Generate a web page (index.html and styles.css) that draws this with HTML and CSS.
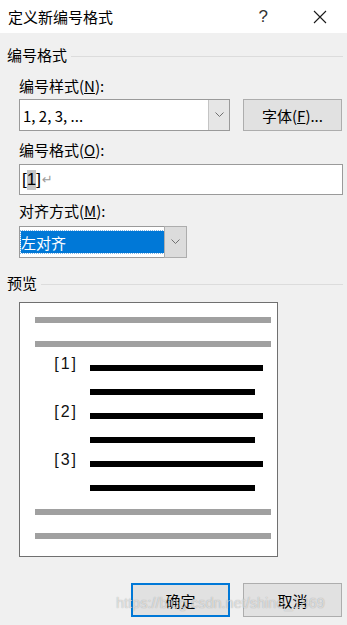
FILE: index.html
```html
<!DOCTYPE html>
<html lang="zh-CN">
<head>
    <meta charset="UTF-8">
    <title>定义新编号格式</title>
    <link rel="stylesheet" href="styles.css">
</head>
<body>
    <div class="dialog">
        <div class="titlebar">
            <span class="title">定义新编号格式</span>
            <span class="help">?</span>
            <svg class="close" width="14" height="14" viewBox="0 0 14 14">
                <path d="M1 1 L13 13 M13 1 L1 13" stroke="#1a1a1a" stroke-width="1.1" fill="none"/>
            </svg>
        </div>

        <div class="body">
            <div class="group">
                <span>编号格式</span>
                <div class="rule"></div>
            </div>

            <div class="field">
                <div class="label">编号样式(<u>N</u>):</div>
                <div class="row">
                    <div class="combo wide">
                        <div class="value">1, 2, 3, ...</div>
                        <div class="arrow">
                            <svg width="9" height="6" viewBox="0 0 9 6"><path d="M0.5 0.5 L4.5 4.5 L8.5 0.5" stroke="#707070" fill="none"/></svg>
                        </div>
                    </div>
                    <button class="btn">字体(<u>F</u>)...</button>
                </div>
            </div>

            <div class="field">
                <div class="label second">编号格式(<u>O</u>):</div>
                <div class="textbox">[<span class="sel">1</span>]<span class="ret">↵</span></div>
            </div>

            <div class="field">
                <div class="label third">对齐方式(<u>M</u>):</div>
                <div class="combo narrow">
                    <div class="value picked"><span>左对齐</span></div>
                    <div class="arrow dark">
                        <svg width="9" height="6" viewBox="0 0 9 6"><path d="M0.5 0.5 L4.5 4.5 L8.5 0.5" stroke="#707070" fill="none"/></svg>
                    </div>
                </div>
            </div>

            <div class="group preview-head">
                <span>预览</span>
                <div class="rule"></div>
            </div>

            <div class="preview">
                <div class="line grey"></div>
                <div class="line grey"></div>
                <div class="item"><span class="num">[1]</span><div class="bar"></div></div>
                <div class="item"><span class="num"></span><div class="bar short"></div></div>
                <div class="item"><span class="num">[2]</span><div class="bar"></div></div>
                <div class="item"><span class="num"></span><div class="bar short"></div></div>
                <div class="item"><span class="num">[3]</span><div class="bar"></div></div>
                <div class="item"><span class="num"></span><div class="bar short"></div></div>
                <div class="line grey"></div>
                <div class="line grey last"></div>
            </div>

            <div class="buttons">
                <button class="btn primary">确定</button>
                <button class="btn">取消</button>
            </div>
        </div>

        <div class="watermark">https://blog.csdn.net/shine_1869</div>
    </div>
</body>
</html>
```

FILE: styles.css
```css
body {
    margin: 0;
    padding: 0;
    background-color: #f0f0f0;
    font-family: "Noto Sans CJK SC", "Noto Sans", sans-serif;
    font-size: 15px;
    color: #000;
}

.dialog {
    position: relative;
    width: 347px;
    height: 625px;
    overflow: hidden;
}

.titlebar {
    height: 33px;
    background-color: #fff;
    display: flex;
    align-items: center;
    padding-left: 8px;
}

.title {
    flex: 1;
    font-size: 15px;
    line-height: 20px;
}

.help {
    font-family: "Liberation Sans", sans-serif;
    font-size: 17px;
    color: #333;
    margin-right: 45px;
}

.close {
    margin-right: 20px;
}

.body {
    padding: 0 4px 0 7px;
}

.group {
    display: flex;
    align-items: center;
    margin-top: 12px;
    line-height: 20px;
}

.group .rule {
    flex: 1;
    border-top: 1px solid #dcdcdc;
    margin-left: 4px;
    margin-top: 2px;
}

.field {
    padding-left: 12px;
}

.label {
    margin-top: 11px;
    line-height: 20px;
}

.label.second {
    margin-top: 9px;
}

.label.third {
    margin-top: 6px;
}

.row {
    display: flex;
    gap: 13px;
    margin-top: 3px;
}

.combo {
    display: flex;
    height: 32px;
    box-sizing: border-box;
    border: 1px solid #9a9a9a;
    background-color: #fff;
}

.combo.wide {
    width: 211px;
}

.combo.narrow {
    width: 168px;
    margin-top: 5px;
}

.value {
    flex: 1;
    display: flex;
    align-items: center;
    padding-left: 3px;
}

.value.picked {
    padding: 4px 0 4px 1px;
}

.value.picked span {
    display: flex;
    align-items: center;
    width: 100%;
    height: 100%;
    background-color: #0078d7;
    color: #fff;
    outline: 1px dotted #7fb5e6;
}

.arrow {
    width: 20px;
    display: flex;
    align-items: center;
    justify-content: center;
    background-color: #e6e6e6;
    border-left: 1px solid #c4c4c4;
}

.arrow.dark {
    background-color: #dcdcdc;
    border: 1px solid #adadad;
    margin: -1px -1px -1px 0;
    width: 21px;
}

.btn {
    width: 99px;
    height: 32px;
    border: 1px solid #adadad;
    background-color: #e1e1e1;
    font-family: "Noto Sans CJK SC", "Noto Sans", sans-serif;
    font-size: 15px;
    color: #000;
    padding: 0;
}

.textbox {
    margin-top: 4px;
    width: 324px;
    height: 31px;
    box-sizing: border-box;
    border: 1px solid #9a9a9a;
    background-color: #fff;
    padding: 0 0 0 2px;
    display: flex;
    align-items: center;
    font-family: "Liberation Sans", sans-serif;
    font-size: 17px;
}

.textbox .sel {
    background-color: #c6c6c6;
}

.textbox .ret {
    color: #9a9a9a;
    font-size: 13px;
    margin-left: 1px;
    font-family: "DejaVu Sans", sans-serif;
}

.preview-head {
    margin-top: 15px;
}

.preview {
    margin: 9px 0 0 12px;
    width: 259px;
    box-sizing: border-box;
    border: 1px solid #707070;
    background-color: #fff;
    padding: 14px 0 17px 0;
}

.line {
    height: 6px;
    margin: 0 0 18px 15px;
    width: 236px;
}

.line.grey {
    background-color: #a0a0a0;
}

.line.last {
    margin-bottom: 0;
}

.item {
    display: flex;
    align-items: flex-start;
    height: 6px;
    margin-bottom: 18px;
}

.num {
    width: 58px;
    text-align: right;
    margin-top: -11px;
    line-height: 20px;
    font-family: "Liberation Sans", sans-serif;
    font-size: 16px;
    letter-spacing: 2px;
    color: #111;
}

.bar {
    margin-left: 12px;
    width: 173px;
    height: 6px;
    background-color: #000;
}

.bar.short {
    width: 165px;
}

.buttons {
    display: flex;
    justify-content: flex-end;
    gap: 13px;
    margin-top: 26px;
    padding-right: 1px;
}

.buttons .btn {
    height: 34px;
}

.btn.primary {
    border: 2px solid #0078d7;
}

.watermark {
    position: absolute;
    left: 116px;
    top: 595px;
    white-space: nowrap;
    font-family: "Liberation Sans", sans-serif;
    font-size: 14.5px;
    color: rgba(255, 255, 255, 0.6);
    text-shadow: 0 0 1px rgba(0, 0, 0, 0.35);
}
```
